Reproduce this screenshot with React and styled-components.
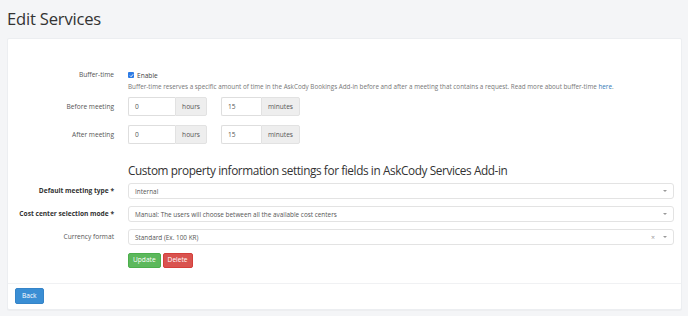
import React from "react";
import styled, { createGlobalStyle } from "styled-components";

const GlobalStyle = createGlobalStyle`
  html, body {
    margin: 0;
    padding: 0;
    background: #f4f5f7;
    font-family: "Open Sans", "Noto Sans", sans-serif;
    color: #555;
  }
`;

const Page = styled.div`
  padding: 8px 6px 0 7px;
  width: 688px;
  height: 316px;
  box-sizing: border-box;
`;

const Title = styled.h1`
  margin: 0 0 9px 0;
  font-weight: 400;
  font-size: 16.6px;
  line-height: 21px;
  color: #333;
  letter-spacing: -0.2px;
`;

const Card = styled.div`
  background: #fff;
  border: 1px solid #eceef1;
  border-radius: 2px;
  box-shadow: 0 1px 1px rgba(0, 0, 0, 0.03);
  width: 675px;
  box-sizing: border-box;
`;

const CardBody = styled.div`
  padding: 31px 7px 15px 0;
  display: flex;
  flex-direction: column;
`;

const Row = styled.div`
  display: grid;
  grid-template-columns: 106px 1fr;
  column-gap: 14px;
  align-items: ${(p) => (p.$top ? "start" : "center")};
  margin-bottom: ${(p) => p.$mb || 0}px;
`;

const Label = styled.label`
  text-align: right;
  font-size: 6.6px;
  color: ${(p) => (p.$bold ? "#333" : "#555")};
  font-weight: ${(p) => (p.$bold ? 700 : 400)};
  line-height: 10px;
`;

const CheckLine = styled.div`
  display: flex;
  align-items: center;
  gap: 3px;
  font-size: 6.6px;
  color: #444;
  height: 10px;
`;

const Check = styled.span`
  width: 6px;
  height: 6px;
  border-radius: 1px;
  background: #2c7be5;
  display: inline-flex;
  align-items: center;
  justify-content: center;
`;

const Help = styled.div`
  font-size: 6.3px;
  color: #777;
  margin-top: 2px;
  line-height: 10px;
  a {
    color: #337ab7;
    text-decoration: none;
  }
`;

const Groups = styled.div`
  display: flex;
  gap: 14px;
`;

const InputGroup = styled.div`
  display: flex;
  width: 79px;
  height: 19px;
`;

const Input = styled.div`
  flex: 1;
  border: 1px solid #dedede;
  border-right: none;
  border-radius: 2px 0 0 2px;
  font-size: 6.6px;
  color: #555;
  display: flex;
  align-items: center;
  padding-left: 6px;
`;

const Addon = styled.div`
  background: #eee;
  border: 1px solid #e2e2e2;
  border-radius: 0 2px 2px 0;
  font-size: 6.6px;
  color: #555;
  display: flex;
  align-items: center;
  padding: 0 6px;
`;

const Heading = styled.h2`
  margin: 0;
  font-weight: 400;
  font-size: 11.8px;
  line-height: 18px;
  color: #333;
  letter-spacing: -0.4px;
  white-space: nowrap;
`;

const Select = styled.div`
  height: 16px;
  border: 1px solid #e3e3e3;
  border-radius: 3px;
  box-sizing: border-box;
  display: flex;
  align-items: center;
  padding: 0 6px 0 6px;
  font-size: 6.4px;
  color: #555;
`;

const SelectText = styled.span`
  flex: 1;
`;

const Clear = styled.span`
  font-size: 7px;
  color: #999;
  margin-right: 8px;
`;

const Caret = styled.span`
  width: 0;
  height: 0;
  border-left: 2px solid transparent;
  border-right: 2px solid transparent;
  border-top: 2px solid #999;
`;

const Buttons = styled.div`
  display: flex;
  gap: 2px;
`;

const Button = styled.button`
  height: 15px;
  padding: 0 4px;
  border: 1px solid ${(p) => p.$border};
  background: ${(p) => p.$bg};
  color: #fff;
  font-family: inherit;
  font-size: 6.6px;
  border-radius: 2px;
  line-height: 1;
  cursor: pointer;
`;

const Footer = styled.div`
  border-top: 1px solid #f0f1f3;
  padding: 4px 7px 5px 7px;
  display: flex;
`;

const BackButton = styled(Button)`
  height: 16px;
  padding: 0 6px;
`;

const CheckIcon = () => (
  <svg width="5" height="5" viewBox="0 0 10 10">
    <path d="M2 5.2 L4.2 7.4 L8.2 2.6" fill="none" stroke="#fff" strokeWidth="1.8" />
  </svg>
);

const SelectField = ({ label, bold, value, clearable, mb }) => (
  <Row $mb={mb}>
    <Label $bold={bold}>{label}</Label>
    <Select>
      <SelectText>{value}</SelectText>
      {clearable && <Clear>×</Clear>}
      <Caret />
    </Select>
  </Row>
);

const TimeRow = ({ label, mb }) => (
  <Row $mb={mb}>
    <Label>{label}</Label>
    <Groups>
      <InputGroup>
        <Input>0</Input>
        <Addon>hours</Addon>
      </InputGroup>
      <InputGroup>
        <Input>15</Input>
        <Addon>minutes</Addon>
      </InputGroup>
    </Groups>
  </Row>
);

export default function App() {
  return (
    <>
      <GlobalStyle />
      <Page>
        <Title>Edit Services</Title>
        <Card>
          <CardBody>
            <Row $top $mb={5}>
              <Label>Buffer-time</Label>
              <div>
                <CheckLine>
                  <Check>
                    <CheckIcon />
                  </Check>
                  Enable
                </CheckLine>
                <Help>
                  Buffer-time reserves a specific amount of time in the AskCody Bookings Add-in before and after a
                  meeting that contains a request. Read more about buffer-time <a href="#">here</a>.
                </Help>
              </div>
            </Row>
            <TimeRow label="Before meeting" mb={9} />
            <TimeRow label="After meeting" mb={17} />
            <Row $mb={4}>
              <span />
              <Heading>Custom property information settings for fields in AskCody Services Add-in</Heading>
            </Row>
            <SelectField label="Default meeting type *" bold value="Internal" mb={7} />
            <SelectField
              label="Cost center selection mode *"
              bold
              value="Manual: The users will choose between all the available cost centers"
              mb={7}
            />
            <SelectField label="Currency format" value="Standard (Ex. 100 KR)" clearable mb={8} />
            <Row>
              <span />
              <Buttons>
                <Button $bg="#5cb85c" $border="#4cae4c">Update</Button>
                <Button $bg="#d9534f" $border="#d43f3a">Delete</Button>
              </Buttons>
            </Row>
          </CardBody>
          <Footer>
            <BackButton $bg="#3a8ed4" $border="#3584c8">Back</BackButton>
          </Footer>
        </Card>
      </Page>
    </>
  );
}
